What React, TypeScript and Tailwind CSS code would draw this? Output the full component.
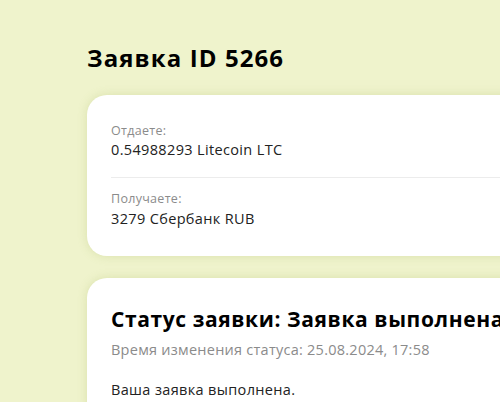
const font = { fontFamily: '"Open Sans", "Noto Sans", sans-serif' };

export default function App() {
  return (
    <div className="w-[500px] h-[402px] overflow-hidden bg-[#eff3cc] text-[#1a1a1a]" style={font}>
      <div className="w-[640px] pl-[87px] pt-[42px]">
        <h1 className="text-[24px] font-bold leading-[32px] tracking-[1.1px] text-black">Заявка ID 5266</h1>

        {/* Order details */}
        <div className="mt-[21px] rounded-[20px] bg-white px-6 pt-[28px] pb-[27px] shadow-[0_0_10px_rgba(170,185,100,0.3)]">
          <div className="pb-[17px] border-b border-[#ececec]">
            <div className="text-[12.5px] leading-[16px] tracking-[0.3px] text-[#8b8b8b]">Отдаете:</div>
            <div className="mt-px text-[14.5px] leading-[20px] tracking-[0.35px] text-[#222]">0.54988293 Litecoin LTC</div>
          </div>
          <div className="pt-[13px]">
            <div className="text-[12.5px] leading-[16px] tracking-[0.3px] text-[#8b8b8b]">Получаете:</div>
            <div className="mt-[2px] text-[14.5px] leading-[20px] tracking-[0.35px] text-[#222]">3279 Сбербанк RUB</div>
          </div>
        </div>

        {/* Status */}
        <div className="mt-[22px] rounded-[20px] bg-white px-6 pt-[27px] pb-6 shadow-[0_0_10px_rgba(170,185,100,0.3)]">
          <div className="text-[21px] font-bold leading-[28px] tracking-[0.6px] text-black whitespace-nowrap">Статус заявки: Заявка выполнена</div>
          <div className="mt-[7px] text-[14.5px] leading-[20px] tracking-[0.25px] text-[#8b8b8b]">Время изменения статуса: 25.08.2024, 17:58</div>
          <div className="mt-[20px] text-[14.5px] leading-[20px] tracking-[0.35px] text-[#222]">Ваша заявка выполнена.</div>
        </div>
      </div>
    </div>
  );
}
